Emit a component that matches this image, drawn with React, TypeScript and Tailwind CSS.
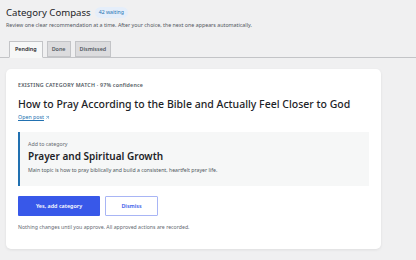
import { ArrowUpRight } from 'lucide-react';

const tabs = ['Pending', 'Done', 'Dismissed'];

export default function App() {
    return (
        <div className="w-[416px] h-[260px] overflow-hidden bg-[#f0f0f1] text-[#1d2327] font-['Noto_Sans',sans-serif]">
            {/* Header */}
            <div className="pl-[6px] pt-[6px]">
                <div className="flex items-center gap-[4px] h-[13px]">
                    <h1 className="text-[9.6px] leading-[13px] font-normal text-[#1d2327]">Category Compass</h1>
                    <span className="rounded-full bg-[#e5eefa] text-[#2271b1] text-[5.2px] leading-[11px] px-[4px]">42 waiting</span>
                </div>
                <p className="text-[5.3px] leading-[8px] text-[#50575e] mt-[2px]">
                    Review one clear recommendation at a time. After your choice, the next one appears automatically.
                </p>
            </div>

            {/* Tabs */}
            <div className="mt-[12px] flex items-end gap-[4px] pl-[9px] border-b border-[#c3c4c7] h-[17px]">
                {tabs.map((t, i) => (
                    <div
                        key={t}
                        className={`px-[4px] flex items-center text-[5.4px] font-semibold border border-[#c3c4c7] ${
                            i === 0 ? 'bg-[#f6f7f7] text-[#1d2327] border-b-[#f6f7f7] -mb-px h-[17px] px-[5px]' : 'bg-[#dcdcde] text-[#50575e] h-[16px]'
                        }`}
                    >
                        {t}
                    </div>
                ))}
            </div>

            {/* Card */}
            <div className="mx-[6px] mt-[11px] w-[375px] bg-white rounded-[5px] shadow-[0_1px_3px_rgba(0,0,0,0.08)] px-[12px] pt-[12px] pb-[18px]">
                <div className="text-[5.3px] leading-[8px] tracking-[0.2px] text-[#50575e] font-semibold">
                    EXISTING CATEGORY MATCH · 97% confidence
                </div>
                <h2 className="mt-[8px] text-[10.5px] leading-[14px] font-medium text-[#1d2327]">
                    How to Pray According to the Bible and Actually Feel Closer to God
                </h2>
                <div className="mt-[2px] flex">
                    <a className="flex items-center gap-[1px] text-[5.3px] leading-[8px] text-[#2271b1] underline">
                        Open post <ArrowUpRight className="w-[5px] h-[5px]" strokeWidth={2} />
                    </a>
                </div>

                <div className="mt-[11px] bg-[#f6f7f7] border-l-2 border-[#2271b1] pl-[8px] pr-[8px] pt-[8px] pb-[12px]">
                    <div className="text-[5.3px] leading-[8px] text-[#646970]">Add to category</div>
                    <div className="mt-[1px] text-[10px] leading-[14px] font-semibold text-[#1d2327]">Prayer and Spiritual Growth</div>
                    <p className="mt-[3px] text-[5.2px] leading-[8px] text-[#50575e]">
                        Main topic is how to pray biblically and build a consistent, heartfelt prayer life.
                    </p>
                </div>

                <div className="mt-[10px] flex gap-[5px]">
                    <button className="w-[82px] h-[20px] bg-[#3858e9] text-white text-[5.4px] font-semibold rounded-[1px]">
                        Yes, add category
                    </button>
                    <button className="w-[53px] h-[20px] bg-white border border-[#a8b5f5] text-[#3858e9] text-[5.4px] font-semibold rounded-[1px]">
                        Dismiss
                    </button>
                </div>
                <p className="mt-[7px] text-[5.2px] leading-[8px] text-[#646970]">
                    Nothing changes until you approve. All approved actions are recorded.
                </p>
            </div>
        </div>
    );
}
